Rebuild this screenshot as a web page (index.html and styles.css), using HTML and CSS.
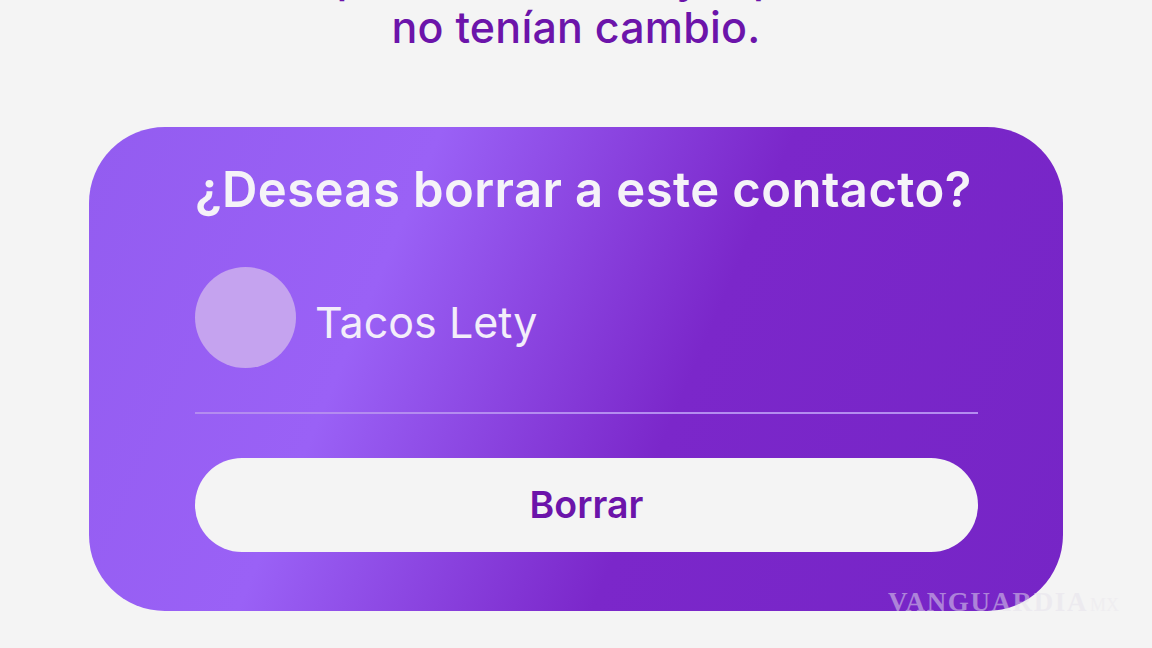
FILE: index.html
```html
<!DOCTYPE html>
<html lang="es">
<head>
<meta charset="utf-8">
<title>Borrar contacto</title>
<link rel="stylesheet" href="styles.css">
</head>
<body>
<main class="screen">
  <p class="intro">pedir en el local ya que<br>no tenían cambio.</p>
  <section class="card">
    <h1 class="card-title">¿Deseas borrar a este contacto?</h1>
    <div class="contact">
      <div class="avatar"></div>
      <span class="contact-name">Tacos Lety</span>
    </div>
    <hr class="divider">
    <button class="delete-btn" type="button">Borrar</button>
  </section>
  <div class="watermark">VANGUARDIA<span class="watermark-mx">MX</span></div>
</main>
</body>
</html>
```
FILE: styles.css
```css
* { box-sizing: border-box; }
html, body { margin: 0; padding: 0; }
body {
  width: 1152px;
  height: 648px;
  overflow: hidden;
  background: #f4f4f4;
  font-family: Inter, Lato, sans-serif;
}
.screen {
  position: relative;
  width: 1152px;
  height: 648px;
  overflow: hidden;
  display: flex;
  flex-direction: column;
}
.intro {
  margin: -48px 0 0;
  height: 175px;
  text-align: center;
  font-size: 43px;
  line-height: 50px;
  letter-spacing: 0.2px;
  font-weight: 500;
  color: #6c14aa;
}
.card {
  margin-left: 89px;
  width: 974px;
  height: 484px;
  border-radius: 76px;
  padding: 30px 85px 0 106px;
  background: linear-gradient(113deg, #935cf0 0%, #9a61f6 30%, #7b27ca 60%, #7625c6 100%);
  display: flex;
  flex-direction: column;
}
.card-title {
  margin: 0;
  font-size: 49px;
  line-height: 66px;
  letter-spacing: 0.4px;
  font-weight: 600;
  color: #f5f3f8;
  white-space: nowrap;
}
.contact {
  margin-top: 44px;
  display: flex;
  align-items: center;
  gap: 19px;
}
.avatar {
  width: 101px;
  height: 101px;
  border-radius: 50%;
  background: #c5a3ef;
}
.contact-name {
  font-size: 43px;
  line-height: 56px;
  font-weight: 400;
  color: #f3eefa;
  position: relative;
  top: 4px;
}
.divider {
  margin: 44px 0 0;
  border: 0;
  height: 2px;
  background: #b48cf0;
}
.delete-btn {
  margin-top: 44px;
  padding: 0 0 2px;
  height: 94px;
  border: 0;
  border-radius: 47px;
  background: #f4f4f4;
  color: #6c14aa;
  font-family: inherit;
  font-size: 37.5px;
  font-weight: 600;
}
.watermark {
  position: absolute;
  left: 888px;
  top: 588px;
  font-family: "Liberation Serif", serif;
  font-size: 27px;
  line-height: 28px;
  font-weight: 700;
  letter-spacing: 1.6px;
  color: rgba(228, 225, 235, 0.5);
  white-space: nowrap;
}
.watermark-mx {
  font-size: 18px;
  font-weight: 400;
  letter-spacing: 0;
  margin-left: 2px;
  opacity: .6;
}
```
